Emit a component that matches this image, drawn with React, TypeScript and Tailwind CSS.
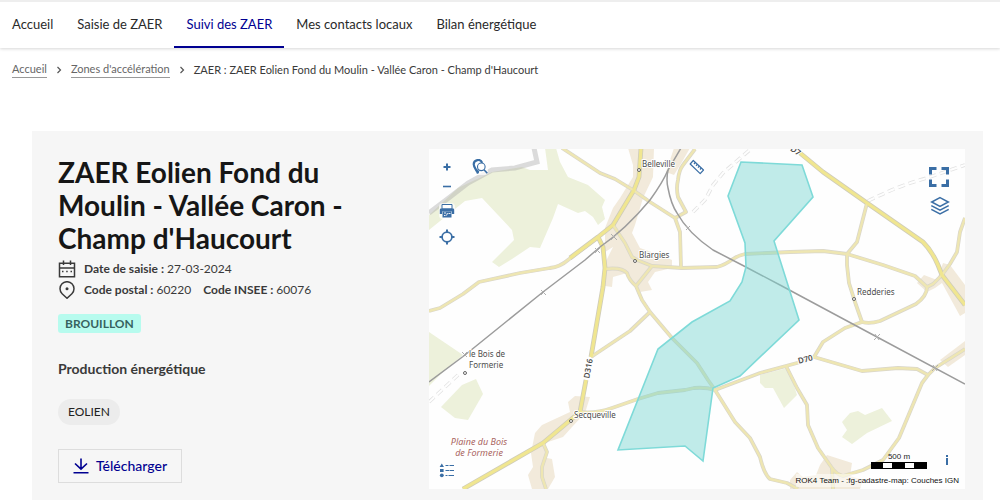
import type { ReactNode } from 'react';

const navItems = ['Accueil', 'Saisie de ZAER', 'Suivi des ZAER', 'Mes contacts locaux', 'Bilan énergétique'];

const forests = [
  '545,148 556,148 560,162 568,177 588,185 605,200 602,207 605,219 598,225 593,217 585,211 578,213 558,204 553,218 540,248 530,247 512,259 499,267 492,262 514,240 512,230 482,198 465,201 450,213 429,230 429,215 458,188 492,172 522,167 530,170 548,170',
  '429,332 463,355 445,370 429,386',
  '441,407 462,385 476,379 483,394 468,420 455,418',
  '760,375 787,368 791,376 797,395 784,408 773,388 765,388 760,383',
  '842,422 850,413 858,411 865,415 882,408 892,421 867,433 852,444 842,437 847,430',
];

const builtAreas = [
  '628,148 654,148 653,177 643,198 635,225 632,233 640,248 660,255 672,260 672,268 655,272 648,282 652,290 640,292 633,285 627,273 613,277 612,287 605,286 604,265 613,247 605,252 605,228 613,208 620,198 633,177 633,165',
  '674,148 690,148 682,162 674,175 666,172',
  '568,402 575,396 590,397 585,413 572,427 563,437 545,443 547,458 552,459 555,477 548,489 532,489 528,475 533,467 531,453 535,433 542,425 570,412',
  '827,455 852,463 850,476 863,480 860,489 790,489 790,480 797,472 803,477 816,475 820,465',
  '943,263 950,265 965,285 965,313 960,316 942,283 935,288 927,292 917,283 924,275 937,280',
  '940,360 965,341 965,355 948,367',
];

const minorRoads = [
  'M562,148 L600,173 L615,179 L633,190 L650,202 L675,218 L680,232 L681,267',
  'M675,218 L686,212 L678,197 Q676,188 678,180 Q679,170 683,165 L695,149',
  'M613,225 L625,243 L632,257 L637,260 L652,266 L682,268 L717,267 Q725,265 733,259 Q739,255 745,254 L790,252 L823,251 L847,254 L883,265 L915,276 L927,287 Q927,296 916,304 L880,321 Q870,324 862,322 L845,328 L823,342 L814,357 L797,363 L760,373 L715,390',
  'M715,390 L735,422 L750,438 L760,457 Q764,474 770,479 L787,483 L798,489',
  'M715,390 Q706,387 694,388 L685,390 L658,393 L638,399 L612,408 Q595,414 580,412',
  'M605,269 Q622,267 627,273 Q629,280 636,286 L642,300 L650,312 L672,338 L697,363 L708,380 L715,390',
  'M652,266 L636,286',
  'M591,357 L600,351 L630,331 L650,312',
  'M867,203 L857,242 L847,254 L847,265 L849,283 L855,302 L862,322',
  'M965,218 L960,232 L957,252 L950,264 L942,275 L933,284 L927,287',
  'M814,357 L862,371 L898,368 L917,369 L928,375 L935,368 L965,349',
  'M928,375 L922,383 L899,438 L883,460 L863,470 L843,476 Q836,474 832,468 L818,448 L808,425 L807,405 L797,388 L786,366',
  'M832,468 L833,489',
  'M543,443 L547,452 L542,467 L542,477 L546,489',
  'M598,237 L568,260 Q560,267 550,268 L520,273 L479,282 L463,294 L440,308 L429,311',
];

const majorRoads = [
  'M641,148 L639,177 L634,190 L613,225 L598,237 L570,258',
  'M598,237 L603,247 L605,268 L603,287 L591,357',
  'M586,380 L580,412 L543,443 L463,489',
  'M800,153 L823,172 L867,203 L923,242 Q932,251 938,265 L942,275 L965,305',
];

const railways = [
  'M429,382 L465,355 L543,292 L585,260 L600,247 Q626,229 650,200 Q663,182 668,170 L681,148',
  'M668,170 Q666,180 668,188 Q671,204 677,213 Q688,233 713,250 L742,265 L780,285 L877,337 L965,384',
];

const crossings = ['M541,290 l5,5 m0,-5 l-5,5', 'M595,248 l5,5 m0,-5 l-5,5', 'M611,234 l6,6 m0,-6 l-6,6', 'M686,226 l4,4 m0,-4 l-4,4', 'M875,334 l4,6 m1,-6 l-6,6', 'M933,365 l4,6 m1,-6 l-6,6', 'M462,352 l5,5 m0,-5 l-5,5'];

const hamlets = [
  [639, 170],
  [635, 261],
  [571, 421],
  [854, 299],
  [465, 373],
];

const places = [
  { x: 642, y: 167, label: 'Belleville' },
  { x: 639, y: 258, label: 'Blargies' },
  { x: 857, y: 295, label: 'Redderies' },
  { x: 469, y: 357, label: 'le Bois de' },
  { x: 469, y: 368, label: 'Formerie' },
  { x: 574, y: 418, label: 'Secqueville' },
];

function MapDrawing() {
  return (
    <svg viewBox="429 149 536 340" className="block h-full w-full" role="img" aria-label="Carte de la zone" preserveAspectRatio="xMidYMid slice">
      <rect x="429" y="149" width="536" height="340" fill="#fefefe" />
      {forests.map((p) => <polygon key={p} points={p} fill="#edf1db" />)}
      {builtAreas.map((p) => <polygon key={p} points={p} fill="#f2eadb" />)}
      <path d="M429,213 L450,197 L468,183 L492,170 L515,168 L537,162 L534,148" fill="none" stroke="#a8a8a8" strokeOpacity="0.4" strokeWidth="5" />
      <g fill="none">
        {['M693,212 L705,200 L713,185 L723,173 L752,148', 'M868,201 Q900,185 927,178 L965,165', 'M429,402 L458,375'].map((d) => (
          <g key={d} strokeDasharray="7 4">
            <path d={d} stroke="#e2e2e2" strokeWidth="3.6" />
            <path d={d} stroke="#fefefe" strokeWidth="2" />
          </g>
        ))}
        <g strokeLinejoin="round">
          {minorRoads.map((d) => <path key={d} d={d} stroke="#d9d6cb" strokeWidth="3.8" />)}
          {majorRoads.map((d) => <path key={d} d={d} stroke="#cfccba" strokeWidth="4.8" />)}
          {minorRoads.map((d) => <path key={d} d={d} stroke="#eee6b2" strokeWidth="2.4" />)}
          {majorRoads.map((d) => <path key={d} d={d} stroke="#f0e690" strokeWidth="3.2" />)}
        </g>
        {railways.map((d) => <path key={d} d={d} stroke="#9c9c9c" strokeWidth="1.5" />)}
        {crossings.map((d) => <path key={d} d={d} stroke="#b0b0b0" strokeWidth="1" />)}
      </g>
      {hamlets.map(([x, y]) => <circle key={x} cx={x} cy={y} r="1.5" fill="#fff" stroke="#555" strokeWidth="0.9" />)}
      <g fontFamily='"Noto Sans", sans-serif' fontSize="8" fill="#4c4c4c" stroke="#fff" strokeWidth="2" paintOrder="stroke" strokeLinejoin="round">
        {places.map((p) => <text key={p.label} x={p.x} y={p.y}>{p.label}</text>)}
        <g fill="#a96460" fontSize="9" fontStyle="italic" textAnchor="middle">
          <text x="479" y="445">Plaine du Bois</text>
          <text x="479" y="456">de Formerie</text>
        </g>
        <g fontWeight="600" textAnchor="middle">
          <text transform="translate(591 369) rotate(-80)">D316</text>
          <text transform="translate(806 362) rotate(-14)">D70</text>
          <text transform="translate(794 153) rotate(36)">D7</text>
        </g>
      </g>
      <polygon
        points="741,162 802,165 813,197 774,241 799,320 740,376 713,388 703,461 685,446 618,450 658,349 692,322 730,301 742,282 746,267 745,243 728,196"
        fill="#77d5d2"
        fillOpacity="0.46"
        stroke="#7edad8"
        strokeWidth="1.6"
      />
    </svg>
  );
}

function Tool({ label, place, children }: { label: string; place: string; children: ReactNode }) {
  return (
    <button type="button" aria-label={label} className={`absolute flex items-center justify-center text-[#3a6ea5] ${place}`}>
      {children}
    </button>
  );
}

function MapPanel() {
  return (
    <div className="relative aspect-[536/340] min-w-0 flex-1 overflow-hidden">
      <MapDrawing />
      <Tool label="Zoom avant" place="left-2.5 top-2.5 size-4">
        <svg viewBox="0 0 16 16" className="size-4" fill="none" stroke="currentColor" strokeWidth="2"><path d="M4.500 8h7M8 4.500v7" /></svg>
      </Tool>
      <Tool label="Zoom arrière" place="left-2.5 top-7 size-4">
        <svg viewBox="0 0 16 16" className="size-4" fill="none" stroke="currentColor" strokeWidth="1.600"><path d="M4 9.500h8" /></svg>
      </Tool>
      <Tool label="Imprimer" place="left-2.5 top-[54px] size-4 rounded-sm bg-white/70">
        <svg viewBox="0 0 16 16" className="size-4">
          <path d="M3 1.500h10v4.500H3z" fill="#fff" stroke="currentColor" />
          <path d="M2 5.500h12a1.200 1.200 0 0 1 1.200 1.200V11H13V8.500H3V11H.8V6.700A1.200 1.200 0 0 1 2 5.500z" fill="currentColor" />
          <path d="M3.500 8.500h9v6h-9z" fill="currentColor" />
          <path d="M5 10h2M8.500 10l-1 2.500M9.500 10.500h2M5 12.500h1.500" stroke="#fff" strokeWidth="0.900" />
        </svg>
      </Tool>
      <Tool label="Me localiser" place="left-2.5 top-20 size-4">
        <svg viewBox="0 0 16 16" className="size-4" fill="none" stroke="currentColor" strokeWidth="1.700"><circle cx="8" cy="8" r="4.900" /><path d="M8 .5v3M8 12.500v3M.5 8h3M12.500 8h3" strokeWidth="2" /></svg>
      </Tool>
      <Tool label="Rechercher un lieu" place="left-[43px] top-2.5 size-4 rounded-sm bg-white/70">
        <svg viewBox="0 0 16 16" className="size-4">
          <path d="M6 14.500C4.800 11.500 1.700 8.500 1.700 5.300A4.400 4.400 0 0 1 10.200 3.800" fill="none" stroke="currentColor" strokeWidth="2.200" />
          <path d="M4.500 9.500l1.500 5 1.300-2.300z" fill="currentColor" />
          <circle cx="9.300" cy="7.800" r="3.800" fill="#fff" stroke="currentColor" strokeWidth="1.100" />
          <path d="M12 10.700l3.300 3.600" stroke="currentColor" strokeWidth="1.600" />
        </svg>
      </Tool>
      <Tool label="Mesurer une distance" place="left-[260px] top-2.5 size-4">
        <svg viewBox="0 0 16 16" className="size-4" fill="none" stroke="currentColor" strokeWidth="1.200" strokeLinejoin="round"><path d="M4.300 1.500l10.200 9.500-3.300 3.600L1.200 5z" fill="#fff" /><path d="M6.300 3.500L5 5M8.300 5.300L7 6.800M10.300 7.200L9 8.700M12.300 9L11 10.500" /></svg>
      </Tool>
      <Tool label="Plein écran" place="right-4 top-[18px] size-5">
        <svg viewBox="0 0 20 20" className="size-5" fill="none" stroke="currentColor" strokeWidth="3"><path d="M1.500 7.500V1.500h6M12.500 1.500h6v6M18.500 12.500v6h-6M7.500 18.500h-6v-6" /></svg>
      </Tool>
      <Tool label="Couches" place="right-[15px] top-[47px] size-5">
        <svg viewBox="0 0 20 20" className="size-5" fill="none" stroke="currentColor" strokeWidth="1.500"><path d="M10 1.700l8.300 4.300L10 10.300 1.700 6z" /><path d="M1.300 9.600l8.700 4.500 8.700-4.500M1.300 13.300l8.700 4.500 8.700-4.500" /></svg>
      </Tool>
      <Tool label="Légende" place="bottom-[11px] left-2.5 size-4">
        <svg viewBox="0 0 16 16" className="size-4" fill="currentColor"><path d="M2.800 1.500l2.200 3.500H.6zM1 7h3.600v3H1z" /><circle cx="2.800" cy="13.300" r="1.900" /><path d="M6.500 3h3v1h-3zM10.500 3H15v1h-4.500zM6.500 8h4v1h-4zM11 8h4v1h-4zM6.500 13h2v1h-2zM9.500 13H15v1H9.500z" /></svg>
      </Tool>
      <Tool label="Informations" place="bottom-5 right-2.5 size-4">
        <svg viewBox="0 0 16 16" className="size-4" fill="currentColor"><path d="M7 2h2v2H7zM7 5h2v7H7z" /></svg>
      </Tool>
      <div className="absolute right-[38px] bottom-5 w-14 text-center font-[Liberation_Sans,sans-serif] text-[8px] leading-[9px] text-[#222]">
        500 m
        <svg viewBox="0 0 56 7" className="mt-px block h-[7px] w-full" aria-hidden="true"><path d="M0 0h56v7H0z" /><path d="M12 1h9v5h-9zM34 1h9v5h-9z" fill="#fff" /></svg>
      </div>
      <p className="absolute right-1.5 bottom-0.5 bg-white/50 font-[Liberation_Sans,sans-serif] text-[8px] leading-[13px] text-[#111]">
        ROK4 Team - :fg-cadastre-map: Couches IGN
      </p>
    </div>
  );
}

function Chevron() {
  return (
    <svg viewBox="0 0 8 8" className="mx-2 size-2" fill="none" stroke="#555" strokeWidth="1.200" aria-hidden="true"><path d="M2.500 1l3 3-3 3" /></svg>
  );
}

export default function App() {
  return (
    <div className="h-screen overflow-hidden bg-white font-[Lato,sans-serif] text-[#3a3a3a]">
      <header className="border-t-2 border-[#eeeeee] shadow-[0_1px_3px_rgba(0,0,0,0.16)]">
        <nav aria-label="Menu principal" className="flex text-[13px] leading-4">
          {navItems.map((item, i) => (
            <a
              key={item}
              href="#"
              aria-current={i === 2 ? 'page' : undefined}
              className={`border-b-2 px-3 py-[14px] ${i === 2 ? 'border-[#000091] text-[#000091]' : 'border-transparent text-[#2a2a2a]'}`}
            >
              {item}
            </a>
          ))}
        </nav>
      </header>

      <nav aria-label="Fil d'Ariane" className="flex items-center px-3 pt-[13px] text-[11px] leading-4">
        <a href="#" className="border-b border-[#999] text-[#666]">Accueil</a>
        <Chevron />
        <a href="#" className="border-b border-[#999] text-[#666]">Zones d'accélération</a>
        <Chevron />
        <span>ZAER : ZAER Eolien Fond du Moulin - Vallée Caron - Champ d'Haucourt</span>
      </nav>

      <main className="mt-[53px] mr-[17px] ml-8 flex items-start bg-[#f6f6f6] pt-[18px] pr-[18px] pb-6 pl-[26px]">
        <section className="w-[371px] shrink-0">
          <h1 className="w-[300px] pt-[7px] text-[28px] leading-[33px] font-bold text-[#161616]">
            ZAER Eolien Fond du Moulin - Vallée Caron - Champ d'Haucourt
          </h1>
          <div className="mt-1 flex flex-col gap-px text-xs leading-5">
            <p className="flex items-center gap-2">
              <svg viewBox="0 0 18 18" className="size-[18px]" fill="none" stroke="currentColor" strokeWidth="1.500" aria-hidden="true"><path d="M1.500 3.200h15v13.600h-15zM1.500 8h15M5.500.5v4.500M12.500.5v4.500" /><path d="M4 11.500h1.500M8.200 11.500h1.500M12.500 11.500H14" /></svg>
              <span><b>Date de saisie :</b> 27-03-2024</span>
            </p>
            <p className="flex items-center gap-2">
              <svg viewBox="0 0 18 18" className="size-[18px]" fill="none" stroke="currentColor" strokeWidth="1.500" aria-hidden="true"><path d="M9 17.300l-4.900-4.600a7 7 0 1 1 9.800 0z" /><circle cx="9" cy="7.700" r="1.500" fill="currentColor" stroke="none" /></svg>
              <span className="flex gap-3">
                <span><b>Code postal :</b> 60220</span>
                <span><b>Code INSEE :</b> 60076</span>
              </span>
            </p>
          </div>
          <p className="mt-[14px] w-fit rounded-[3px] bg-[#b7fbee] px-[7px] text-xs leading-[19px] font-bold text-[#37635f]">BROUILLON</p>
          <h2 className="mt-[26px] text-sm leading-5 font-bold">Production énergétique</h2>
          <p className="mt-5 w-fit rounded-full bg-[#ececec] px-2.5 text-xs leading-[26px] text-[#222]">EOLIEN</p>
          <button type="button" className="mt-6 flex h-[34px] items-center gap-[7px] border border-[#dddddd] px-[14px] text-sm font-medium text-[#000091]">
            <svg viewBox="0 0 16 16" className="size-4" fill="none" stroke="currentColor" strokeWidth="1.600" aria-hidden="true"><path d="M8 .5v10.500M2 5.500l6 5.700 6-5.700M.5 14.800h15" /></svg>
            Télécharger
          </button>
          <h2 className="mt-3 text-sm leading-5 font-bold">Potentiel de production</h2>
        </section>
        <MapPanel />
      </main>
    </div>
  );
}
